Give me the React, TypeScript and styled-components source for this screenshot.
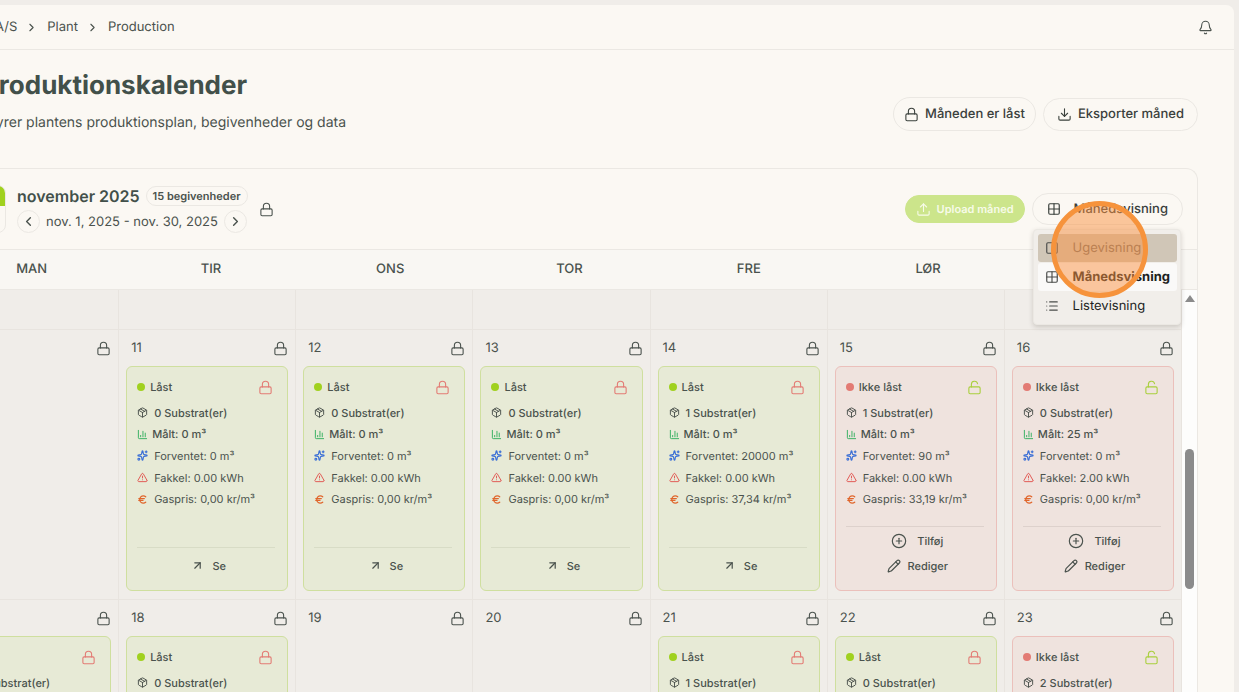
import React from "react";
import styled, { createGlobalStyle, css } from "styled-components";
import {
  ArrowUpRight,
  Bell,
  ChartColumn,
  ChevronLeft,
  ChevronRight,
  CirclePlus,
  Download,
  Euro,
  Grid2x2,
  List,
  Lock,
  LockOpen,
  Package,
  Pencil,
  Sparkles,
  Square,
  TriangleAlert,
  Upload,
} from "lucide-react";

const color = {
  page: "#f0ede9",
  surface: "#fbf8f3",
  line: "#ebe8e3",
  text: "#4a524d",
  heading: "#42504a",
  lime: "#a0d11f",
  limeSoft: "#cce58b",
  red: "#e37b74",
};

const Global = createGlobalStyle`
  *, *::before, *::after { box-sizing: border-box; }
  html, body { margin: 0; height: 100%; overflow: hidden; background: ${color.page}; }
  #root { height: 100%; }
  body, button { font-family: Inter, "Liberation Sans", sans-serif; color: ${color.text}; text-rendering: geometricPrecision; }
  button { cursor: pointer; }
  h1, h2, p, ul, ol { margin: 0; padding: 0; list-style: none; font-weight: inherit; }
  svg { flex: none; display: block; }
`;

const Shell = styled.div`
  display: flex;
  flex-direction: column;
  height: 100%;
  margin: 0 5px 0 -96px;
  padding-top: 5px;
`;

const Surface = styled.div`
  flex: 1;
  min-height: 0;
  display: flex;
  flex-direction: column;
  background: ${color.surface};
  border-radius: 8px 8px 0 0;
`;

const TopBar = styled.header`
  flex: none;
  display: flex;
  align-items: center;
  justify-content: space-between;
  height: 45px;
  padding: 0 21px 0 91px;
  border-bottom: 1px solid ${color.line};
`;

const Crumbs = styled.ol`
  display: flex;
  align-items: center;
  gap: 9px;
  font-size: 13px;
  line-height: 20px;

  li { display: flex; align-items: center; gap: 8px; }
  a { color: inherit; text-decoration: none; }
`;

const GhostIcon = styled.button`
  display: grid;
  place-items: center;
  width: 16px;
  height: 24px;
  padding: 0;
  border: 0;
  background: none;
`;

const Content = styled.main`
  flex: 1;
  min-height: 0;
  display: flex;
  flex-direction: column;
  padding: 16px 36px 0 37px;
`;

const PageHead = styled.div`
  flex: none;
  display: flex;
  align-items: center;
  justify-content: space-between;
  height: 102px;
  padding-bottom: 6px;
`;

const Intro = styled.div`
  align-self: flex-start;
  display: grid;
  gap: 7px;
  padding: 2px 0 0 41px;
  white-space: nowrap;

  h1 { font-size: 26px; line-height: 36px; font-weight: 700; color: ${color.heading}; }
  p { font-size: 14px; line-height: 24px; }
`;

const Actions = styled.div`
  display: flex;
  align-items: center;
  gap: 7px;
`;

const Pill = styled.button<{ $height: number; $pad: number; $gap: number }>`
  display: flex;
  align-items: center;
  gap: ${(p) => p.$gap}px;
  height: ${(p) => p.$height}px;
  padding: 0 ${(p) => p.$pad}px;
  border: 1px solid ${color.line};
  border-radius: 18px;
  background: ${color.surface};
  font-size: 13px;
  line-height: 20px;
  font-weight: 500;
  white-space: nowrap;
  color: #3a403c;
`;

const UploadButton = styled(Pill)`
  border-color: ${color.limeSoft};
  background: ${color.limeSoft};
  color: #f7fbe9;
  font-size: 11px;
  font-weight: 600;
`;

const Calendar = styled.section`
  flex: 1;
  min-height: 0;
  display: flex;
  flex-direction: column;
  border: 1px solid ${color.line};
  border-bottom: 0;
  border-radius: 12px 12px 0 0;
`;

const Toolbar = styled.div`
  flex: none;
  display: flex;
  align-items: center;
  justify-content: space-between;
  height: 81px;
  padding: 0 14px 0 16px;
  border-bottom: 1px solid ${color.line};
`;

const Period = styled.div`
  display: flex;
  align-items: center;
  gap: 11px;
`;

const DayTile = styled.div`
  width: 48px;
  height: 48px;
  border: 1px solid ${color.line};
  border-radius: 8px;
  overflow: hidden;

  &::before { content: ""; display: block; height: 20px; background: ${color.lime}; }
`;

const PeriodText = styled.div`
  display: grid;
  gap: 3px;
`;

const PeriodLine = styled.div`
  display: flex;
  align-items: center;
  gap: 6px;
  white-space: nowrap;

  h2 { font-size: 16px; line-height: 22px; font-weight: 600; color: ${color.heading}; }
  span { font-size: 13px; line-height: 24px; }
`;

const Badge = styled.strong`
  padding: 0 6px;
  border: 1px solid ${color.line};
  border-radius: 10px;
  font-size: 11px;
  line-height: 18px;
  font-weight: 600;
`;

const RoundButton = styled.button`
  display: grid;
  place-items: center;
  width: 23px;
  height: 23px;
  padding: 0;
  border: 1px solid ${color.line};
  border-radius: 50%;
  background: none;
`;

const ViewPicker = styled.div`
  position: relative;
`;

const Menu = styled.ul`
  position: absolute;
  z-index: 2;
  top: 36px;
  left: 1px;
  right: 2px;
  display: grid;
  gap: 1px;
  padding: 4px;
  border: 1px solid ${color.line};
  border-radius: 4px;
  background: #f1eeea;
  box-shadow: 0 2px 5px rgba(60, 50, 40, 0.2);
`;

const MenuItem = styled.button<{ $state?: "hover" | "active" }>`
  display: flex;
  align-items: center;
  gap: 14px;
  width: 100%;
  height: 28px;
  padding: 0 7px;
  border: 0;
  border-radius: 3px;
  background: none;
  font-size: 13px;
  white-space: nowrap;
  color: #1d1f1e;

  svg { color: #4a4c4a; }
  ${(p) => p.$state === "hover" && css`background: #d0c6b7; color: #7a6e62;`}
  ${(p) => p.$state === "active" && css`background: #faf9f8; font-weight: 700;`}
`;

const ClickMark = styled.div`
  position: absolute;
  z-index: 3;
  top: 8px;
  left: 19px;
  width: 97px;
  height: 97px;
  border: 5px solid #f6933c;
  border-radius: 50%;
  background: rgba(250, 146, 66, 0.5);
  pointer-events: none;
`;

const Weekdays = styled.div`
  flex: none;
  display: grid;
  grid-template-columns: repeat(7, 1fr);
  height: 40px;
  border-bottom: 1px solid ${color.line};
  background: #f9f7f3;
  font-size: 13px;
  line-height: 38px;
  font-weight: 500;
  text-align: center;
`;

const ScrollPane = styled.div`
  flex: 1;
  min-height: 0;
  display: flex;
  overflow: hidden;
`;

const Weeks = styled.div`
  flex: 1;
  min-width: 0;
  background: #f0ede9;
`;

const Week = styled.div<{ $tail?: boolean }>`
  display: grid;
  grid-template-columns: repeat(7, minmax(0, 1fr));
  min-height: ${(p) => (p.$tail ? 40 : 270)}px;
`;

const Cell = styled.div`
  display: flex;
  flex-direction: column;
  padding: 8px 7px;
  border-right: 1px solid #e8e4df;
  border-bottom: 1px solid #e8e4df;
`;

const CellHead = styled.div`
  display: flex;
  align-items: center;
  justify-content: space-between;
  height: 20px;
  margin-bottom: 8px;
  padding-left: 5px;
  font-size: 13px;
`;

const EventCard = styled.article<{ $locked: boolean }>`
  flex: 1;
  display: flex;
  flex-direction: column;
  padding: 10px 12px 12px 10px;
  border: 1px solid ${(p) => (p.$locked ? "#cfdf9f" : "#ebc0bb")};
  border-radius: 6px;
  background: ${(p) => (p.$locked ? "#e7ead6" : "#efe3de")};
  font-size: 11px;
`;

const Status = styled.div<{ $locked: boolean }>`
  display: flex;
  align-items: center;
  gap: 5px;
  height: 20px;
  margin-bottom: 5px;
  padding-right: 2px;
  font-weight: 500;

  &::before {
    content: "";
    width: 8px;
    height: 8px;
    border-radius: 50%;
    background: ${(p) => (p.$locked ? color.lime : color.red)};
  }
  svg { margin-left: auto; color: ${(p) => (p.$locked ? color.red : "#a9cf3c")}; }
`;

const Stats = styled.ul`
  display: grid;
  grid-auto-rows: 1fr;
  height: 108px;
`;

const Stat = styled.li<{ $tint: string; $strong?: boolean; $gap?: number }>`
  display: flex;
  align-items: center;
  gap: ${(p) => p.$gap ?? 6}px;
  font-weight: ${(p) => (p.$strong ? 500 : 400)};
  white-space: nowrap;

  svg { color: ${(p) => p.$tint}; }
`;

const CardFoot = styled.div<{ $locked: boolean }>`
  margin-top: auto;
  padding-top: ${(p) => (p.$locked ? 5 : 1)}px;
  border-top: 1px solid ${(p) => (p.$locked ? "#d8dcc6" : "#ddd1cc")};
`;

const CardAction = styled.button<{ $gap: number }>`
  display: flex;
  align-items: center;
  justify-content: center;
  gap: ${(p) => p.$gap}px;
  width: 100%;
  height: 25px;
  padding: 0 0 0 5px;
  border: 0;
  background: none;
  font-size: 11px;
  font-weight: 500;
`;

const Scrollbar = styled.div`
  flex: none;
  display: flex;
  flex-direction: column;
  align-items: center;
  width: 15px;
  padding-top: 5px;
  background: #fdfdfc;

  &::before {
    content: "";
    border: 5px solid transparent;
    border-top: 0;
    border-bottom: 7px solid #8b8b8b;
  }
  &::after {
    content: "";
    width: 9px;
    height: 140px;
    margin-top: 147px;
    border-radius: 5px;
    background: #8b8b8b;
  }
`;

interface Plan {
  locked: boolean;
  substrates: number;
  measured: string;
  expected: string;
  flare: string;
  price: string;
}

interface Day {
  date: number;
  plan?: Plan;
}

const plan = (
  locked: boolean,
  substrates = 0,
  measured = "0",
  expected = "0",
  flare = "0.00",
  price = "0,00",
): Plan => ({ locked, substrates, measured, expected, flare, price });

const weeks: Day[][] = [
  [
    { date: 10 },
    { date: 11, plan: plan(true) },
    { date: 12, plan: plan(true) },
    { date: 13, plan: plan(true) },
    { date: 14, plan: plan(true, 1, "0", "20000", "0.00", "37,34") },
    { date: 15, plan: plan(false, 1, "0", "90", "0.00", "33,19") },
    { date: 16, plan: plan(false, 0, "25", "0", "2.00", "0,00") },
  ],
  [
    { date: 17, plan: plan(true) },
    { date: 18, plan: plan(true) },
    { date: 19 },
    { date: 20 },
    { date: 21, plan: plan(true, 1) },
    { date: 22, plan: plan(true) },
    { date: 23, plan: plan(false, 2) },
  ],
];

const weekdays = ["MAN", "TIR", "ONS", "TOR", "FRE", "LØR", "SØN"];

function PlanCard({ data }: { data: Plan }) {
  const { locked } = data;
  const LockIcon = locked ? Lock : LockOpen;
  return (
    <EventCard $locked={locked}>
      <Status $locked={locked}>
        {locked ? "Låst" : "Ikke låst"}
        <LockIcon size={15} strokeWidth={1.75} />
      </Status>
      <Stats>
        <Stat $tint="#454b47" $strong>
          <Package size={11} strokeWidth={2} />
          {data.substrates} Substrat(er)
        </Stat>
        <Stat $tint="#2fae5c" $strong $gap={4}>
          <ChartColumn size={11} strokeWidth={2} />
          Målt: {data.measured} m³
        </Stat>
        <Stat $tint="#3b6fd6">
          <Sparkles size={11} strokeWidth={2.5} />
          Forventet: {data.expected} m³
        </Stat>
        <Stat $tint="#e0504c">
          <TriangleAlert size={11} strokeWidth={2} />
          Fakkel: {data.flare} kWh
        </Stat>
        <Stat $tint="#e0662c">
          <Euro size={11} strokeWidth={2.75} />
          Gaspris: {data.price} kr/m³
        </Stat>
      </Stats>
      <CardFoot $locked={locked}>
        {locked ? (
          <CardAction $gap={8}>
            <ArrowUpRight size={13} strokeWidth={2.25} />
            Se
          </CardAction>
        ) : (
          <>
            <CardAction $gap={10}>
              <CirclePlus size={16} strokeWidth={1.75} />
              Tilføj
            </CardAction>
            <CardAction $gap={7}>
              <Pencil size={14} strokeWidth={2} />
              Rediger
            </CardAction>
          </>
        )}
      </CardFoot>
    </EventCard>
  );
}

export default function App() {
  return (
    <>
      <Global />
      <Shell>
        <Surface>
          <TopBar>
            <nav aria-label="Brødkrummer">
              <Crumbs>
                <li><a href="#firma">A/S</a><ChevronRight size={13} /></li>
                <li><a href="#plant">Plant</a><ChevronRight size={13} /></li>
                <li><a href="#production">Production</a></li>
              </Crumbs>
            </nav>
            <GhostIcon aria-label="Notifikationer">
              <Bell size={15} strokeWidth={1.75} />
            </GhostIcon>
          </TopBar>
          <Content>
            <PageHead>
              <Intro>
                <h1>Produktionskalender</h1>
                <p>Styrer plantens produktionsplan, begivenheder og data</p>
              </Intro>
              <Actions>
                <Pill $height={34} $pad={10} $gap={6}>
                  <Lock size={15} strokeWidth={1.75} />
                  Måneden er låst
                </Pill>
                <Pill $height={33} $pad={13} $gap={6}>
                  <Download size={15} strokeWidth={1.75} />
                  Eksporter måned
                </Pill>
              </Actions>
            </PageHead>
            <Calendar>
              <Toolbar>
                <Period>
                  <DayTile />
                  <PeriodText>
                    <PeriodLine>
                      <h2>november 2025</h2>
                      <Badge>15 begivenheder</Badge>
                    </PeriodLine>
                    <PeriodLine>
                      <RoundButton aria-label="Forrige måned"><ChevronLeft size={15} strokeWidth={2.25} /></RoundButton>
                      <span>nov. 1, 2025 - nov. 30, 2025</span>
                      <RoundButton aria-label="Næste måned"><ChevronRight size={15} strokeWidth={2.25} /></RoundButton>
                    </PeriodLine>
                  </PeriodText>
                  <Lock size={15} strokeWidth={1.75} />
                </Period>
                <Actions>
                  <UploadButton $height={28} $pad={10} $gap={6}>
                    <Upload size={15} strokeWidth={1.75} />
                    Upload måned
                  </UploadButton>
                  <ViewPicker>
                    <Pill $height={32} $pad={14} $gap={13} aria-haspopup="menu" aria-expanded="true">
                      <Grid2x2 size={14} strokeWidth={2} />
                      Månedsvisning
                    </Pill>
                    <Menu>
                      <li><MenuItem $state="hover"><Square size={14} strokeWidth={2} />Ugevisning</MenuItem></li>
                      <li><MenuItem $state="active"><Grid2x2 size={14} strokeWidth={2} />Månedsvisning</MenuItem></li>
                      <li><MenuItem><List size={14} strokeWidth={2} />Listevisning</MenuItem></li>
                    </Menu>
                    <ClickMark />
                  </ViewPicker>
                </Actions>
              </Toolbar>
              <Weekdays>
                {weekdays.map((d) => <div key={d}>{d}</div>)}
              </Weekdays>
              <ScrollPane>
                <Weeks>
                  <Week $tail>
                    {weekdays.map((d) => <Cell key={d} />)}
                  </Week>
                  {weeks.map((week) => (
                    <Week key={week[0].date}>
                      {week.map((day) => (
                        <Cell key={day.date}>
                          <CellHead>
                            {day.date}
                            <Lock size={15} strokeWidth={1.75} />
                          </CellHead>
                          {day.plan && <PlanCard data={day.plan} />}
                        </Cell>
                      ))}
                    </Week>
                  ))}
                </Weeks>
                <Scrollbar aria-hidden="true" />
              </ScrollPane>
            </Calendar>
          </Content>
        </Surface>
      </Shell>
    </>
  );
}
